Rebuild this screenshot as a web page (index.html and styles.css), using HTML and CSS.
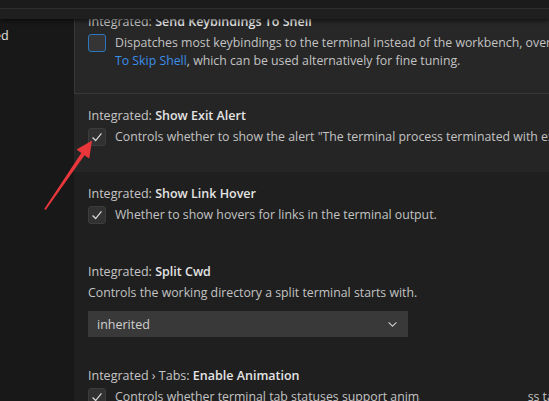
FILE: index.html
```html
<!DOCTYPE html>
<html lang="en">
<head>
    <meta charset="UTF-8">
    <title>Settings - Terminal</title>
    <link rel="stylesheet" href="styles.css">
</head>
<body>
    <div class="header">
        <div class="tabbar"></div>
        <div class="searchband"></div>
    </div>

    <div class="layout">
        <div class="toc">
            <div class="toc-item">Integrated</div>
        </div>

        <div class="settings">
            <div class="setting focused">
                <div class="title">Integrated: <b>Send Keybindings To Shell</b></div>
                <div class="value">
                    <span class="checkbox"></span>
                    <div class="desc">
                        Dispatches most keybindings to the terminal instead of the workbench, overriding <a href="#">Terminal › Integrated: Commands</a><br>
                        <a href="#">To Skip Shell</a>, which can be used alternatively for fine tuning.
                    </div>
                </div>
            </div>

            <div class="setting hovered">
                <div class="title">Integrated: <b>Show Exit Alert</b></div>
                <div class="value">
                    <span class="checkbox checked"><svg viewBox="0 0 18 18"><polyline points="4,9.5 7.5,13 14,5"/></svg></span>
                    <div class="desc">Controls whether to show the alert "The terminal process terminated with exit code" when exit code is non-zero.</div>
                </div>
            </div>

            <div class="setting">
                <div class="title">Integrated: <b>Show Link Hover</b></div>
                <div class="value">
                    <span class="checkbox checked"><svg viewBox="0 0 18 18"><polyline points="4,9.5 7.5,13 14,5"/></svg></span>
                    <div class="desc">Whether to show hovers for links in the terminal output.</div>
                </div>
            </div>

            <div class="setting select-setting">
                <div class="title">Integrated: <b>Split Cwd</b></div>
                <div class="desc">Controls the working directory a split terminal starts with.</div>
                <div class="dropdown">
                    <span>inherited</span>
                    <svg viewBox="0 0 12 8"><polyline points="1.5,1.5 6,6 10.5,1.5"/></svg>
                </div>
            </div>

            <div class="setting">
                <div class="title">Integrated › Tabs: <b>Enable Animation</b></div>
                <div class="value">
                    <span class="checkbox checked"><svg viewBox="0 0 18 18"><polyline points="4,9.5 7.5,13 14,5"/></svg></span>
                    <div class="desc">Controls whether terminal tab statuses support animation (eg. in progress tasks).</div>
                </div>
            </div>
        </div>
    </div>

    <div class="gap-mask"></div>

    <svg class="arrow" width="549" height="401" viewBox="0 0 549 401">
        <polygon points="44.3,209 81.3,153.1 76.6,149.6 92,140.5 89.2,158.4 84.5,155.3 45.7,210"/>
    </svg>
</body>
</html>
```

FILE: styles.css
```css
body {
    margin: 0;
    padding: 0;
    width: 549px;
    height: 401px;
    overflow: hidden;
    background: #1f1f1f;
    color: #cccccc;
    font-family: "Open Sans", "Noto Sans", sans-serif;
    font-size: 12.5px;
    position: relative;
}
.header {
    position: absolute;
    top: 0;
    left: 0;
    right: 0;
    z-index: 2;
    box-shadow: 0 2px 4px rgba(0, 0, 0, 0.55);
}
.tabbar {
    height: 8px;
    background: #1b1b1b;
    border-bottom: 1px solid #2c2c2c;
}
.searchband {
    height: 10px;
    background: #1f1f1f;
}
.layout {
    display: flex;
    height: 401px;
}
.toc {
    width: 74px;
    flex: none;
    background: #181818;
    overflow: hidden;
    padding-top: 27px;
}
.toc-item {
    margin-left: -52px;
    line-height: 18px;
    color: #e2e2e2;
    white-space: nowrap;
}
.settings {
    flex: none;
    width: 760px;
    display: flex;
    flex-direction: column;
}
.setting {
    padding: 13px 14px 26px;
    white-space: nowrap;
}
.setting.focused {
    padding-bottom: 24px;
    background: #272727;
    outline: 1px solid #383838;
    outline-offset: -1px;
}
.setting.hovered {
    background: #252525;
}
.setting.select-setting {
    padding-bottom: 17px;
}
.title {
    line-height: 18px;
    color: #c6c6c6;
}
.title b {
    font-weight: 600;
    color: #e4e4e4;
}
.value {
    display: flex;
    align-items: flex-start;
    gap: 9px;
    margin-top: 3px;
}
.desc {
    font-size: 12.3px;
    line-height: 18px;
    color: #c3c3c3;
}
.select-setting .desc {
    margin-top: 3px;
}
.desc a {
    color: #3b8eea;
    text-decoration: none;
}
.checkbox {
    flex: none;
    width: 16px;
    height: 16px;
    border: 1px solid #3c3c3c;
    border-radius: 3px;
    background: #313131;
}
.checkbox svg {
    display: block;
    width: 16px;
    height: 16px;
    fill: none;
    stroke: #d8d8d8;
    stroke-width: 1.4;
}
.focused .checkbox {
    border-color: #2a77c0;
    background: #353535;
}
.dropdown {
    margin-top: 9px;
    width: 302px;
    height: 26px;
    padding: 0 9px;
    display: flex;
    align-items: center;
    justify-content: space-between;
    background: #393939;
    color: #d0d0d0;
}
.dropdown svg {
    width: 11px;
    height: 7px;
    fill: none;
    stroke: #c8c8c8;
    stroke-width: 1.3;
    margin-right: 1px;
}
.gap-mask {
    position: absolute;
    left: 420px;
    top: 385px;
    width: 108px;
    height: 16px;
    background: #1f1f1f;
}
.arrow {
    position: absolute;
    top: 0;
    left: 0;
    fill: #e8363b;
}
```
